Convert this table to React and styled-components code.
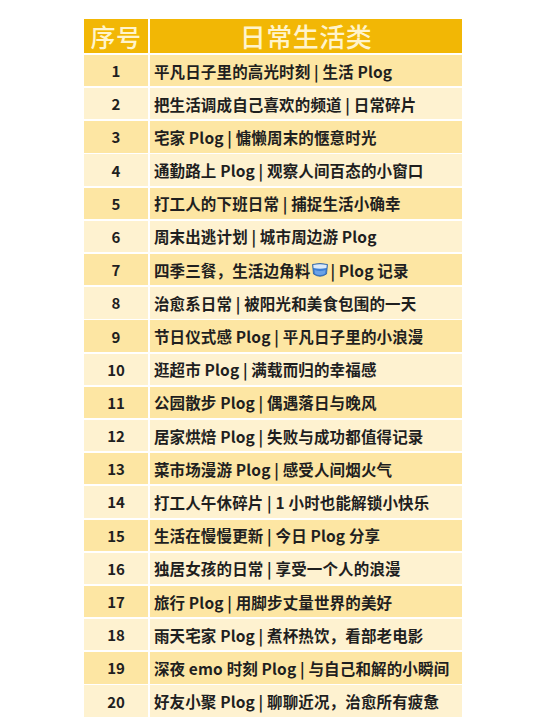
import { styled, createGlobalStyle } from "styled-components";

const GlobalStyle = createGlobalStyle`
    html, body {
        margin: 0;
        padding: 0;
        background: #ffffff;
    }
    body {
        font-family: "Noto Sans CJK SC", "Noto Sans", sans-serif;
    }
`

const StyledPage = styled.div`
    width: 544px;
    height: 725px;
    padding: 19px 0 0 84px;
    box-sizing: border-box;
    background: #ffffff;
`
const StyledTable = styled.div`
    width: 378px;
    display: grid;
    grid-template-columns: 64px 1fr;
    grid-template-rows: 34px;
    grid-auto-rows: 31.3px;
    gap: 1.9px;
`
const StyledHead = styled.div`
    background: #f2b705;
    color: #fff4cc;
    font-family: "Noto Sans CJK SC", sans-serif;
    font-weight: 500;
    font-size: ${(p) => p.$size}px;
    line-height: 34px;
    text-align: center;
    letter-spacing: 0.5px;
`
const StyledNum = styled.div`
    background: ${(p) => (p.$odd ? "#fde6a3" : "#fef2d0")};
    color: #1f1f1f;
    font-weight: 700;
    font-size: 15px;
    display: flex;
    align-items: center;
    justify-content: center;
`
const StyledText = styled.div`
    background: ${(p) => (p.$odd ? "#fde6a3" : "#fef2d0")};
    color: #1f1f1f;
    font-weight: 700;
    font-size: 15.5px;
    letter-spacing: 0.15px;
    display: flex;
    align-items: center;
    padding-left: 4px;
    white-space: pre;
`
const StyledEmoji = styled.svg`
    width: 18px;
    height: 18px;
    margin: 0 1px 0 1px;
`

function Bowl() {
    return (
        <StyledEmoji viewBox="0 0 18 18">
            <path d="M1.5 3.5 Q9 1.5 16.5 3.5 L15.5 13 Q9 17.5 2.5 13 Z" fill="#3d7fd6" stroke="#2b5e9e" strokeWidth="0.8" />
            <path d="M2.3 4 Q9 2.4 15.7 4 L15.4 7 Q9 8.6 2.6 7 Z" fill="#dce9f7" />
            <path d="M3.5 9 Q9 10.8 14.5 9 L14 12.5 Q9 15.5 4 12.5 Z" fill="#7fb1ec" opacity="0.7" />
        </StyledEmoji>
    )
}

const rows = [
    "平凡日子里的高光时刻 | 生活 Plog",
    "把生活调成自己喜欢的频道 | 日常碎片",
    "宅家 Plog | 慵懒周末的惬意时光",
    "通勤路上 Plog | 观察人间百态的小窗口",
    "打工人的下班日常 | 捕捉生活小确幸",
    "周末出逃计划 | 城市周边游 Plog",
    "EMOJI",
    "治愈系日常 | 被阳光和美食包围的一天",
    "节日仪式感 Plog | 平凡日子里的小浪漫",
    "逛超市 Plog | 满载而归的幸福感",
    "公园散步 Plog | 偶遇落日与晚风",
    "居家烘焙 Plog | 失败与成功都值得记录",
    "菜市场漫游 Plog | 感受人间烟火气",
    "打工人午休碎片 | 1 小时也能解锁小快乐",
    "生活在慢慢更新 | 今日 Plog 分享",
    "独居女孩的日常 | 享受一个人的浪漫",
    "旅行 Plog | 用脚步丈量世界的美好",
    "雨天宅家 Plog | 煮杯热饮，看部老电影",
    "深夜 emo 时刻 Plog | 与自己和解的小瞬间",
    "好友小聚 Plog | 聊聊近况，治愈所有疲惫",
]

function App() {
    return (
        <StyledPage>
            <GlobalStyle />
            <StyledTable>
                <StyledHead $size={25}>序号</StyledHead>
                <StyledHead $size={26}>日常生活类</StyledHead>
                {rows.map((text, i) => {
                    const odd = i % 2 === 0
                    return [
                        <StyledNum key={"n" + i} $odd={odd}>{i + 1}</StyledNum>,
                        <StyledText key={"t" + i} $odd={odd}>
                            {text === "EMOJI" ? (
                                <>四季三餐，生活边角料<Bowl />| Plog 记录</>
                            ) : text}
                        </StyledText>,
                    ]
                })}
            </StyledTable>
        </StyledPage>
    )
}

export default App;
